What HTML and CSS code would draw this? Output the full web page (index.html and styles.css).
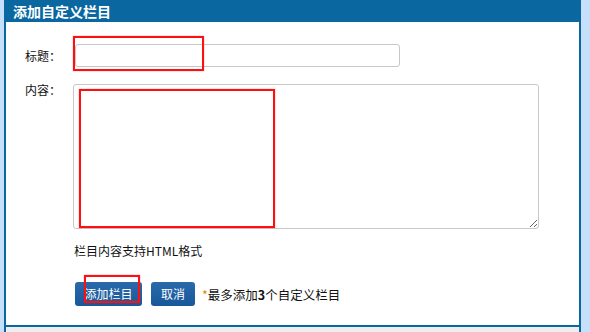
FILE: index.html
```html
<!DOCTYPE html>
<html lang="zh">
<head>
<meta charset="utf-8">
<link rel="stylesheet" href="styles.css">
</head>
<body>
<div class="wrap">
  <div class="panel">
    <div class="header">添加自定义栏目</div>
    <div class="body">
      <div class="row row-title">
        <label class="lbl">标题：</label>
        <input class="inp" type="text">
      </div>
      <div class="row row-content">
        <label class="lbl lbl-top">内容：</label>
        <textarea class="txt"></textarea>
      </div>
      <div class="hint">栏目内容支持HTML格式</div>
      <div class="actions">
        <button class="btn btn-add">添加栏目</button>
        <button class="btn btn-cancel">取消</button>
        <span class="note"><span class="star">*</span>最多添加<b>3</b>个自定义栏目</span>
      </div>
    </div>
  </div>
  <div class="mark mark-1"></div>
  <div class="mark mark-2"></div>
  <div class="mark mark-3"></div>
</div>
</body>
</html>
```
FILE: styles.css
```css
html, body {
  margin: 0;
  padding: 0;
}
body {
  background: #c6e0fc;
  font-family: "Noto Sans CJK SC", "Liberation Sans", sans-serif;
  font-size: 12px;
  color: #111;
  height: 332px;
  overflow: hidden;
}
.wrap {
  position: relative;
  margin-left: 4px;
  width: 573px;
  height: 332px;
  border-left: 2px solid #0b67a0;
  border-right: 2px solid #0b67a0;
  background: #eeeeee;
}
.panel {
  background: #fff;
  height: 325px;
  border-bottom: 2px solid #0b67a0;
  box-sizing: content-box;
}
.header {
  height: 22px;
  line-height: 22px;
  background: #0b67a0;
  color: #fff;
  font-weight: bold;
  font-size: 14px;
  padding-left: 8px;
  margin-left: -1px;
}
.body {
  padding-top: 22px;
}
.row {
  display: flex;
  align-items: center;
}
.lbl {
  width: 49px;
  padding-left: 19px;
  box-sizing: content-box;
  flex: none;
}
.inp {
  width: 325px;
  height: 23px;
  box-sizing: border-box;
  border: 1px solid #c8c8c8;
  border-radius: 3px;
  margin: 0 0 0 1px;
  padding: 0;
  background: #fff;
}
.row-content {
  align-items: flex-start;
  margin-top: 17px;
}
.lbl-top {
  margin-top: -1px;
  line-height: 14px;
}
.txt {
  width: 466px;
  height: 145px;
  box-sizing: border-box;
  border: 1px solid #c8c8c8;
  border-radius: 3px;
  margin: 0 0 0 -1px;
  padding: 0;
  resize: both;
  background: #fff;
}
.hint {
  margin-top: 14px;
  padding-left: 68px;
  line-height: 16px;
}
.actions {
  display: flex;
  align-items: center;
  gap: 9px;
  margin-top: 23px;
  padding-left: 69px;
}
.btn {
  height: 24px;
  border: none;
  border-radius: 3px;
  background: linear-gradient(#2a6aab, #17589a);
  color: #fff;
  font-family: "Noto Sans CJK SC", "Liberation Sans", sans-serif;
  font-size: 12px;
  padding: 0;
  line-height: 24px;
}
.btn-add { width: 67px; }
.btn-cancel { width: 44px; }
.note {
  font-size: 12.5px;
  margin-left: -2px;
}
.note b { font-weight: bold; }
.star { color: #d98a00; }
.mark {
  position: absolute;
  border: 2px solid #ff1010;
  box-shadow: 0 0 1px rgba(255, 0, 0, 0.6);
  box-sizing: border-box;
}
.mark-1 { left: 67px; top: 36px; width: 131px; height: 35px; }
.mark-2 { left: 73px; top: 89px; width: 196px; height: 139px; }
.mark-3 { left: 78px; top: 275px; width: 56px; height: 28px; }
```
